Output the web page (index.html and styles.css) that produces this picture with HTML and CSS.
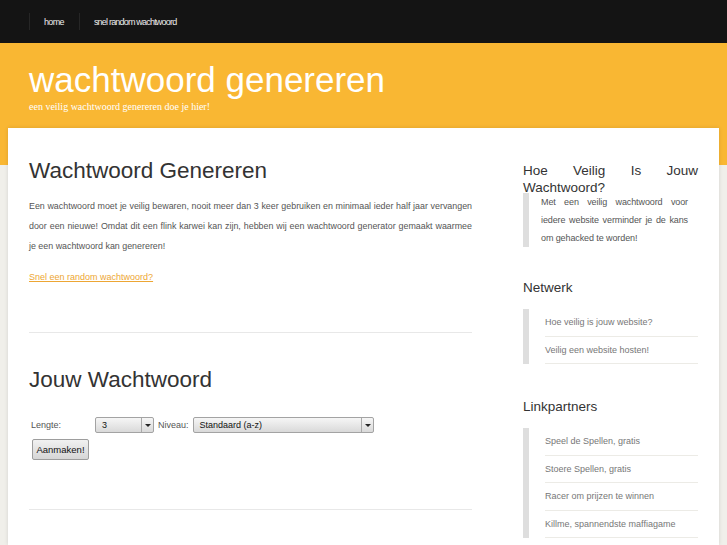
FILE: index.html
```html
<!DOCTYPE html>
<html lang="nl">
<head>
<meta charset="utf-8">
<title>wachtwoord genereren</title>
<link rel="stylesheet" href="styles.css">
</head>
<body>
<div class="topbar">
  <ul class="nav">
    <li><a href="#">home</a></li>
    <li><a href="#">snel random wachtwoord</a></li>
  </ul>
</div>
<div class="page">
  <header class="masthead">
    <h1 class="site-title">wachtwoord genereren</h1>
    <p class="tagline">een veilig wachtwoord genereren doe je hier!</p>
  </header>
  <div class="card">
    <main class="main">
      <h2 class="heading">Wachtwoord Genereren</h2>
      <p class="intro">Een wachtwoord moet je veilig bewaren, nooit meer dan 3 keer gebruiken en minimaal ieder half jaar vervangen door een nieuwe! Omdat dit een flink karwei kan zijn, hebben wij een wachtwoord generator gemaakt waarmee je een wachtwoord kan genereren!</p>
      <p class="quick"><a href="#">Snel een random wachtwoord?</a></p>
      <hr class="rule">
      <h2 class="heading heading-2">Jouw Wachtwoord</h2>
      <form class="gen-form">
        <div class="form-row">
          <span class="label label-len">Lengte:</span>
          <span class="select select-len"><span class="select-val">3</span><span class="select-arrow"></span></span>
          <span class="label">Niveau:</span>
          <span class="select select-lvl"><span class="select-val">Standaard (a-z)</span><span class="select-arrow"></span></span>
        </div>
        <div class="form-row">
          <button type="button" class="btn">Aanmaken!</button>
        </div>
      </form>
      <hr class="rule rule-2">
    </main>
    <aside class="sidebar">
      <section class="widget">
        <h3 class="widget-title widget-title-just">Hoe Veilig Is Jouw Wachtwoord?</h3>
        <blockquote class="quote">Met een veilig wachtwoord voor iedere website verminder je de kans om gehacked te worden!</blockquote>
      </section>
      <section class="widget widget-network">
        <h3 class="widget-title">Netwerk</h3>
        <ul class="links">
          <li><a href="#">Hoe veilig is jouw website?</a></li>
          <li><a href="#">Veilig een website hosten!</a></li>
        </ul>
      </section>
      <section class="widget widget-partners">
        <h3 class="widget-title">Linkpartners</h3>
        <ul class="links">
          <li><a href="#">Speel de Spellen, gratis</a></li>
          <li><a href="#">Stoere Spellen, gratis</a></li>
          <li><a href="#">Racer om prijzen te winnen</a></li>
          <li><a href="#">Killme, spannendste maffiagame</a></li>
        </ul>
      </section>
    </aside>
  </div>
</div>
</body>
</html>
```

FILE: styles.css
```css
html, body {
  margin: 0;
  padding: 0;
}
body {
  font-family: "Liberation Sans", Arial, sans-serif;
  background: #f0efea;
  overflow: hidden;
  height: 545px;
}
a { text-decoration: none; }

.topbar {
  background: #141414;
  height: 43px;
}
.nav {
  list-style: none;
  margin: 0;
  padding: 13px 0 0 29px;
  display: flex;
}
.nav li {
  border-left: 1px solid #262626;
  height: 17px;
  padding: 0 15px 0 14px;
  display: flex;
  align-items: center;
}
.nav a {
  color: #ececec;
  font-size: 9px;
  letter-spacing: -0.8px;
}
.nav li:first-child a {
  letter-spacing: -0.65px;
}

.page {
  background: linear-gradient(#f9b733 0, #f9b733 122px, #f0efea 122px);
  height: 502px;
  overflow: hidden;
}
.masthead {
  height: 85px;
  box-sizing: border-box;
  padding: 17px 29px 0;
}
.site-title {
  margin: 0;
  font-weight: normal;
  font-size: 35px;
  line-height: 40px;
  color: #fff;
}
.tagline {
  margin: 0;
  font-family: "Liberation Serif", "Times New Roman", serif;
  font-size: 10px;
  line-height: 13px;
  color: #fff;
}

.card {
  margin: 0 8px;
  background: #fff;
  box-shadow: 0 0 4px rgba(0,0,0,0.12);
  display: flex;
  gap: 51px;
  padding: 0 21px;
  height: 417px;
}
.main {
  width: 443px;
  flex: none;
}
.heading {
  margin: 28px 0 0;
  font-weight: normal;
  font-size: 22.5px;
  line-height: 30px;
  color: #333;
}
.intro {
  margin: 10px 0 0;
  font-size: 8.9px;
  line-height: 20px;
  color: #555;
  text-align: justify;
}
.quick {
  margin: 11px 0 0;
  font-size: 9px;
  line-height: 20px;
}
.quick a {
  color: #eda634;
  text-decoration: underline;
}
.rule {
  border: 0;
  border-top: 1px solid #e8e8e8;
  margin: 45px 0 0;
}
.heading-2 {
  margin-top: 32px;
}
.gen-form {
  margin: 22px 0 0 2px;
}
.form-row {
  display: flex;
  align-items: center;
  gap: 4px;
}
.label {
  font-size: 9px;
  color: #555;
}
.label-len {
  width: 60px;
}
.select {
  display: flex;
  height: 16px;
  box-sizing: border-box;
  border: 1px solid #a3a3a3;
  border-radius: 2px;
  background: linear-gradient(#f6f6f6, #d9d9d9);
  font-size: 9px;
  color: #111;
}
.select-len { width: 59px; }
.select-lvl { width: 181px; }
.select-val {
  flex: 1;
  padding-left: 6px;
  line-height: 14px;
}
.select-arrow {
  width: 11px;
  border-left: 1px solid #a9a9a9;
  position: relative;
}
.select-arrow::after {
  content: "";
  position: absolute;
  left: 3px;
  top: 6px;
  border-left: 3px solid transparent;
  border-right: 3px solid transparent;
  border-top: 3px solid #222;
}
.btn {
  margin: 6px 0 0 1px;
  height: 21px;
  width: 57px;
  padding: 0;
  border: 1px solid #9d9d9d;
  border-radius: 2px;
  background: linear-gradient(#f1f1f1, #d6d6d6);
  font-family: "Liberation Sans", Arial, sans-serif;
  font-size: 9.5px;
  color: #111;
}
.rule-2 {
  margin-top: 49px;
}

.sidebar {
  width: 175px;
  flex: none;
}
.widget-title {
  margin: 0;
  font-weight: normal;
  font-size: 13.5px;
  line-height: 17px;
  color: #333;
}
.widget:first-child .widget-title {
  margin-top: 34px;
}
.widget-title-just {
  text-align: justify;
}
.quote {
  margin: -3px 0 0;
  border-left: 6px solid #dedede;
  padding: 0 10px 0 12px;
  font-size: 9px;
  letter-spacing: -0.1px;
  line-height: 18px;
  color: #555;
  text-align: justify;
}
.widget-network .widget-title {
  margin-top: 32px;
}
.widget-partners .widget-title {
  margin-top: 34px;
}
.links {
  list-style: none;
  margin: 13px 0 0;
  padding: 0 0 0 16px;
  border-left: 6px solid #dedede;
}
.links li {
  border-bottom: 1px solid #ecebe6;
  line-height: 26.5px;
  font-size: 9px;
}
.widget-partners .links li {
  line-height: 26.6px;
}
.links a {
  color: #777;
}
```
